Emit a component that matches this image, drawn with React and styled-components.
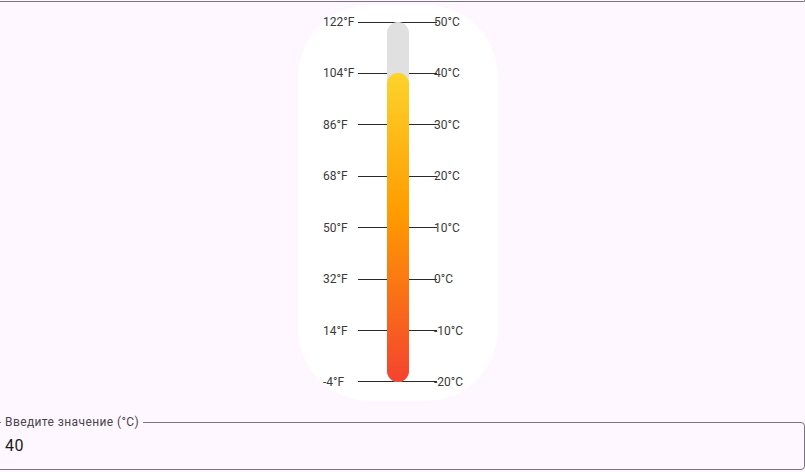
import { useState } from "react";
import styled, { createGlobalStyle } from "styled-components";

const MIN_C = -20;
const MAX_C = 50;
const STEP_C = 10;
const TUBE_HEIGHT = 360;

const GlobalStyle = createGlobalStyle`
  html, body {
    margin: 0;
    padding: 0;
    background: #fef7ff;
    overflow: hidden;
  }
  body {
    font-family: Roboto, "Noto Sans", Arial, sans-serif;
    color: #1d1b20;
  }
`;

const toF = (c) => Math.round((c * 9) / 5 + 32);

const App = () => {
  const [value, setValue] = useState("40");

  const temp = Math.min(MAX_C, Math.max(MIN_C, Number(value) || 0));
  const fillHeight = ((temp - MIN_C) / (MAX_C - MIN_C)) * TUBE_HEIGHT;

  const ticks = [];
  for (let c = MAX_C; c >= MIN_C; c -= STEP_C) ticks.push(c);

  return (
    <>
      <GlobalStyle />
      <Page>
        <PrevField />
        <Card>
          <Scale>
            {ticks.map((c) => (
              <TickRow key={c}>
                <LeftLabel>{toF(c)}°F</LeftLabel>
                <TickLine />
                <RightLabel>{c}°C</RightLabel>
              </TickRow>
            ))}
          </Scale>
          <Tube>
            <Fill style={{ height: fillHeight }} />
          </Tube>
        </Card>
        <Field>
          <Legend>Введите значение (°C)</Legend>
          <Input value={value} onChange={(e) => setValue(e.target.value)} />
        </Field>
      </Page>
    </>
  );
};

export default App;

const Page = styled.div`
  width: 814px;
  margin-left: -9px;
  display: flex;
  flex-direction: column;
`;

const PrevField = styled.div`
  height: 1px;
  border: 1px solid #79747e;
  border-top: none;
  border-radius: 0 0 4px 4px;
`;

const Card = styled.div`
  position: relative;
  width: 200px;
  margin: 3px auto 0;
  padding: 10px 0 12px 25px;
  box-sizing: border-box;
  height: 396px;
  background: #ffffff;
  border-radius: 72px;
`;

const Scale = styled.div`
  height: 374px;
  display: flex;
  flex-direction: column;
  justify-content: space-between;
`;

const TickRow = styled.div`
  height: 14px;
  display: flex;
  align-items: center;
  font-size: 12px;
  line-height: 14px;
  color: #3a3a3a;
`;

const LeftLabel = styled.span`
  width: 35px;
`;

const TickLine = styled.div`
  width: 79px;
  height: 1px;
  background: #2a2a2a;
`;

const RightLabel = styled.span`
  margin-left: -3px;
`;

const Tube = styled.div`
  position: absolute;
  left: 89px;
  top: 17px;
  width: 22px;
  height: ${TUBE_HEIGHT}px;
  border-radius: 11px;
  background: #e0e0e0;
  display: flex;
  flex-direction: column;
  justify-content: flex-end;
`;

const Fill = styled.div`
  width: 100%;
  border-radius: 11px;
  background: linear-gradient(to bottom, #fdd32c 0%, #ff9c00 45%, #f4432f 100%);
`;

const Field = styled.fieldset`
  margin: 14px 0 0;
  padding: 0 13px;
  border: 1px solid #79747e;
  border-radius: 4px;
  min-width: 0;
`;

const Legend = styled.legend`
  margin-left: -4px;
  padding: 0 4px;
  font-size: 12px;
  line-height: 14px;
  letter-spacing: 0.4px;
  color: #49454f;
`;

const Input = styled.input`
  display: block;
  width: 100%;
  height: 32px;
  margin-bottom: 8px;
  padding: 0;
  border: none;
  outline: none;
  background: transparent;
  font-family: Roboto, "Noto Sans", Arial, sans-serif;
  font-size: 16px;
  letter-spacing: 0.5px;
  color: #1d1b20;
`;
